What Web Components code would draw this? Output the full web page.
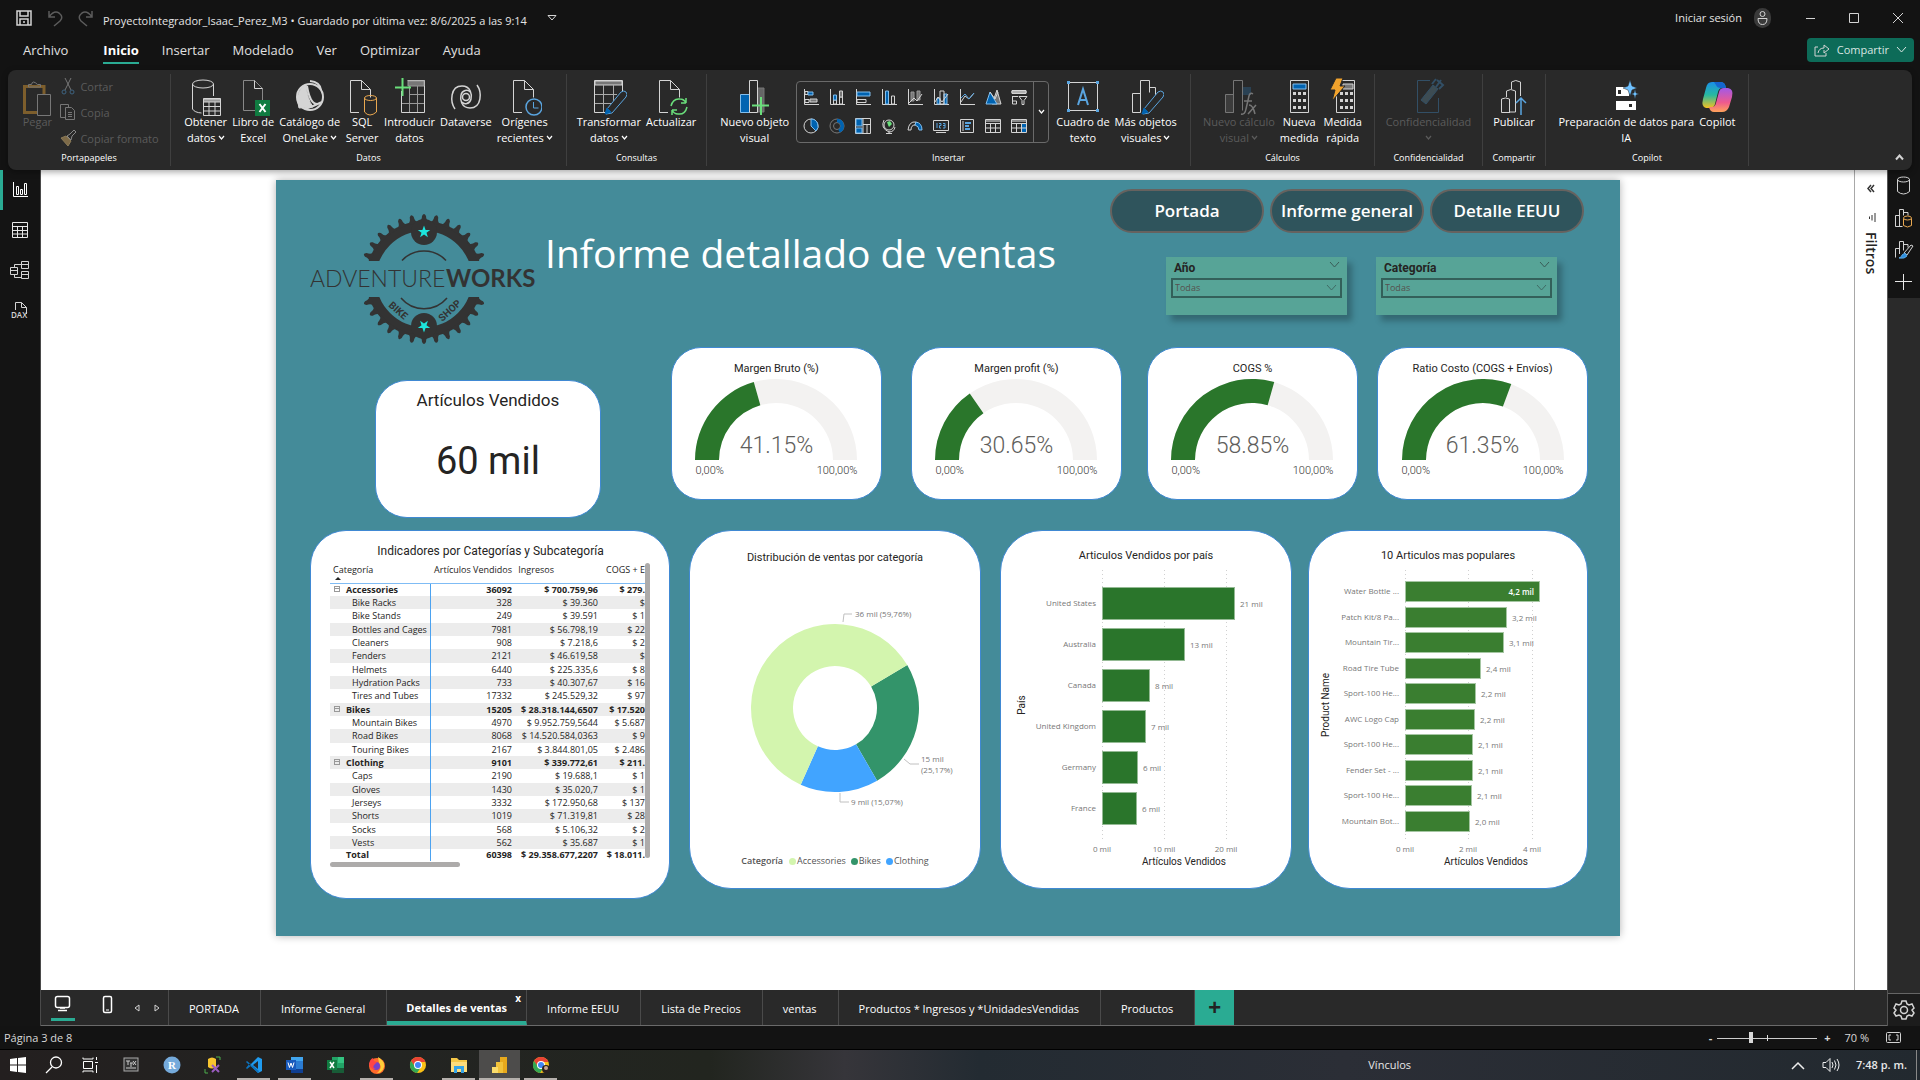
<!DOCTYPE html>
<html lang="es">
<head>
<meta charset="utf-8">
<title>ProyectoIntegrador_Isaac_Perez_M3</title>
<style>
  html, body { margin: 0; height: 100%; background: #131313; }
  body { font: 11px/16px "Open Sans", "Noto Sans", sans-serif; color: #fff; overflow: hidden; }
</style>
</head>
<body>
<app-shell></app-shell>
<script>
const W = '#d4d4d4', B = '#5aa5e0', F = '#0063b1', L = '#83beec';
const svg = (w, h, body, vb) => `<svg width="${w}" height="${h}" viewBox="${vb || `0 0 ${w} ${h}`}" fill="none" stroke="${W}" aria-hidden="true">${body}</svg>`;
const doc = `<path d="M7.5 2.5h11l8 8v22h-19z" stroke="#888"/><path d="M18.5 2.5v8h8"/>`;
const doc2 = `<path d="M14 34.500H5.500V2.500h11l9 9v8M16.500 2.500v9h9"/>`;
const chart3 = `<path d="M4.500 34.500v-19h8M12.500 34.500V2.500h9v12M21.500 9.500h6v8M4.500 34.500h8"/>`;
const pen = `<path d="M15 36l1-5 14-17q3-2 5 0 2 2 0 5l-14 16z" stroke="${B}" fill="#292929"/><path d="M14 36l2-6 4 4z" fill="${F}" stroke="${F}"/>`;
const spiral = 'M6 31C1 24 1 8 13 8c9 0 10 9 9 13-1 5-7 6-9 3';
const I = {
  paste: svg(36, 38, `<path d="M25 17V8.500H5.500v26H19" stroke="#7d5e2c" stroke-width="3"/><path d="M9.500 9V6.500h3q1-5 6 0h3V9z" stroke="#777"/><path d="M18.500 16.500h13v21h-13z" stroke="#777"/>`),
  cut: svg(16, 18, `<path d="M5 0l6 12M11 0L5 12" stroke="#777"/><circle cx="4" cy="14" r="2" stroke="#3d6380"/><circle cx="12" cy="14" r="2" stroke="#3d6380"/>`),
  copy: svg(16, 17, `<path d="M5 13.500H.500V.500h8v3M5.500 3.500h6l3 3v9h-9zM8 8.500h4M8 10.500h4M8 12.500h4" stroke="#777"/>`),
  brush: svg(16, 17, `<path d="M1 8l5-2 5 5-3 5z" fill="#7d6a48" stroke="#8a7a58"/><path d="M7 6l3-2 4-4 2 2-4 4-1 4z" stroke="#888"/>`),
  db: svg(34, 38, `<ellipse cx="14" cy="6" rx="10.500" ry="4"/><path d="M3.500 6v25q2 3.500 9 4M24.500 6v12"/><path d="M14.500 20.500h17v17h-17z"/><path d="M14.500 21h17v3h-17z" fill="#999"/><path d="M14.500 28.500h17M14.500 33h17M20 24v13M26 24v13"/>`),
  excel: svg(34, 38, doc + `<rect x="19" y="22" width="15" height="16" fill="#107c41" stroke="none"/><path d="M23.500 26l6 8M29.500 26l-6 8" stroke="#fff" stroke-width="2"/>`),
  lake: svg(34, 38, `<circle cx="17" cy="19" r="13" stroke-width="2"/><path d="M13 6Q1 15 6 30l14-1Q14 21 13 6z" fill="${W}"/><path d="M14 8q4 24 15 16M17 3q10 1 11 9M12 31q9-3 17-7" stroke-width="2"/>`),
  sql: svg(34, 38, doc2 + `<path d="M19.500 20v14q5 6 12 0V20" stroke="#e9a850"/><ellipse cx="25.500" cy="20" rx="6" ry="2.500" stroke="#e9a850"/>`),
  intro: svg(34, 38, `<path d="M8.500 13v21.500h23v-32h-17"/><path d="M15 3h16v5H15z" fill="#777" stroke="#999"/><path d="M16.500 8v26M24.500 8v26M16 16.500h15M9 25.500h22" stroke="#999"/><path d="M9.500 0v18M2 9.500h16" stroke="#6ade7b" stroke-width="2"/>`),
  verse: svg(34, 38, `<circle cx="17" cy="19" r="3.500" stroke-width="1.500"/><path d="${spiral}" stroke-width="1.500"/><path d="${spiral}" transform="rotate(180 17 19)" stroke-width="1.500"/>`),
  recent: svg(34, 38, doc2 + `<circle cx="26" cy="29" r="8" stroke="${B}" fill="#292929" stroke-width="1.500"/><path d="M25.500 24v6h5" stroke="${B}"/>`),
  transform: svg(36, 38, `<path d="M18 34.500H3.500v-32h28V18"/><path d="M4 3h27v4H4z" fill="#777"/><path d="M12.500 7v27M22.500 7v16M4 16.500h22M4 25.500h16" stroke="#aaa"/>` + pen),
  refresh: svg(34, 38, doc2 + `<path d="M17 28q2-8 9-7 4 0 6 4v-5m0 5h-5M33 29q-2 8-9 7-4 0-6-4v5m0-5h5" stroke="#6ade7b" stroke-width="1.500"/>`),
  newvis: svg(36, 38, `<path d="M20 10h7v24h-7z" fill="#666" stroke="#777"/><path d="M3.500 16.500h9v18h-9z" fill="${F}" stroke="${L}"/><path d="M12.500 2.500h8v32h-8z" fill="#292929"/><path d="M24 19v18M15 27.500h17" stroke="#6ade7b" stroke-width="2"/>`),
  textbox: svg(34, 38, `<path d="M2.500 4.500h29v28h-29z"/><path d="M12 27l5-16 5 16M14 22h6" stroke="${B}" stroke-width="2"/><path d="M1 3h3v3H1zM30 3h3v3h-3zM1 31h3v3H1zM30 31h3v3h-3z" fill="${B}" stroke="none"/>`),
  morevis: svg(36, 38, chart3 + pen),
  calc: svg(36, 38, `<g opacity=".45"><path d="M4.500 34.500v-18h8v18z" fill="#555"/><path d="M12.500 34.500V2.500h9v30"/><path d="M22 9h8v8h-8z" fill="#2d5f86" stroke="none"/><path d="M20 36q4 1 5-5l3-13q1-4 4-2M23 23h8M28 27q4 0 6 9M35 27l-8 9" stroke-width="1.500"/></g>`),
  measure: svg(30, 38, `<path d="M6.500 2.500h18v32h-18z"/><path d="M9 6h13v5H9z" fill="${F}" stroke="${L}"/><path d="M9 15.500h13M9 22.500h13M9 29.500h13" stroke-dasharray="3 2" stroke-width="3"/>`),
  quick: svg(32, 38, `<path d="M9.500 2.500h18v32h-18z"/><path d="M16 6h10v5H16z" fill="#777"/><path d="M13 15.500h13M13 22.500h13M13 29.500h13" stroke-dasharray="3 2" stroke-width="3"/><path d="M9 0h7l-3 8h5L5 23l3-11H3z" fill="#f2a32c" stroke="#292929"/>`),
  label: svg(34, 38, `<g opacity=".9" stroke="#33546d"><path d="M18 2.500H5.500v32h21V20"/><path d="M9 22L21 7l5 4-12 15z" fill="#405058"/><path d="M20 6l4-5M24 9l5-7M27 11l4-4-6-5" stroke-width="2"/></g>`),
  publish: svg(34, 38, `<path d="M13 34.500h-8.500V21q4-2 8 0v13M9.500 19v-6q4-3 9 0v21h-6M14.500 11V4q4-3 9 0v14"/><path d="M24 37V20M19 25l5-5 5 5" stroke="${B}" stroke-width="1.500"/>`),
  prep: svg(34, 38, `<path d="M7 9h13v9H7zM7 23h20v9H7z" fill="#fff" stroke="none"/><path d="M9 12h3v4H9zM20 26h3v3h-3z" fill="#292929" stroke="none"/><path d="M21 2l2 6 5 2-5 2-2 6-2-6-5-2 5-2zM26 11l1 4 3 1-3 1-1 4-1-4-3-1 3-1z" fill="#6ec1ff" stroke="#292929" stroke-width=".5"/>`),
  copilot: `<svg width="34" height="38" viewBox="0 0 34 38" aria-hidden="true"><defs><linearGradient id="ca" x1="0" y1="0" x2="0" y2="1"><stop stop-color="#1a8fe8"/><stop offset=".5" stop-color="#27b9a0"/><stop offset="1" stop-color="#f5c020"/></linearGradient><linearGradient id="cb" x1="0" y1="0" x2="0" y2="1"><stop stop-color="#a259e8"/><stop offset=".6" stop-color="#ee5a8e"/><stop offset="1" stop-color="#ffa25a"/></linearGradient></defs><path d="M12 4h9q4 0 5 6h-4q-3 0-4 4l-3 12q-1 4-5 4H6q-5-1-3-9l3-11q1-6 6-6z" fill="url(#ca)"/><path d="M22 34h-8q-4 0-5-5h3q3 0 4-4l3-11q1-4 5-4h4q6 1 4 9l-3 10q-2 5-7 5z" fill="url(#cb)"/><path d="M14 4h7q4 0 5 6h-5q-4 0-5-3z" fill="#1566cf"/></svg>`,
  save: svg(16, 16, `<path d="M1 1h14v14H1zM4 1v5h8V1M4 15V9h8v6M8 11v2" stroke-width="1.500"/>`),
  undo: svg(16, 18, `<path d="M2 2v6h6M2 8q5-7 10-4 5 4 1 8l-6 5" stroke="#5c5c5c" stroke-width="1.500"/>`),
  redo: svg(16, 18, `<path d="M14 2v6H8M14 8Q9 1 4 4q-5 4-1 8l6 5" stroke="#5c5c5c" stroke-width="1.500"/>`),
  caret: svg(10, 8, `<path d="M1 1.500h8L5 6z"/>`),
  chev: svg(7, 6, `<path d="M1 1l2.500 3L6 1" stroke="currentColor" stroke-width="1.200"/>`),
  chevL: svg(11, 8, `<path d="M1 1l4.500 5L10 1" stroke="currentColor"/>`),
  chevUp: svg(9, 7, `<path d="M1 5.500L4.500 1.500 8 5.500" stroke-width="2"/>`),
  user: svg(18, 20, `<rect x="0" y="0" width="17" height="20" rx="8.500" fill="#3a3a3a" stroke="none"/><circle cx="8.500" cy="6" r="2.500"/><path d="M4 10.500h9q0 6-4.500 6T4 10.500z"/>`),
  min: svg(12, 12, `<path d="M2 6.500h9" />`),
  max: svg(12, 12, `<path d="M1.500 1.500h9v9h-9z"/>`),
  close: svg(12, 12, `<path d="M1 1l10 10M11 1L1 11"/>`),
  share: svg(16, 14, `<path d="M4 4H1v9h11v-3M4 10q1-5 6-5V2l5 4-5 4V7"/>`),
  report: svg(16, 16, `<path d="M1.500 0v14.500H16M4.500 4.500h2v8h-2zM8.500 7.500h2v5h-2zM12.500 1.500h2v11h-2z" stroke="#fff"/>`),
  table: svg(18, 16, `<path d="M1.500.500h15v15h-15zM1 4.500h16M1 8.500h16M1 12h16M6.500 4v11M11.500 4v11" stroke="#e8e8e8"/>`),
  model: svg(20, 20, `<path d="M.500 7.500h7v7h-7zM.500 10.500h7M11.500 1.500h7v7h-7zM11.500 4.500h7M11.500 11.500h7v7h-7zM11.500 14.500h7M4.500 7V4.500h7M4.500 15v2.500h7"/>`),
  dax: `<svg width="18" height="18" viewBox="0 0 18 18" fill="none" stroke="#d4d4d4" aria-hidden="true"><path d="M4.500 9V1.500h6l5 5V13M10.500 1.500v5h5"/><text x="0" y="17" font-size="8" fill="#d4d4d4" stroke="none" font-family="Open Sans" font-weight="600">DAX</text></svg>`,
  cyl: svg(16, 20, `<path d="M1.500 3.500v12q6 5 12 0v-12"/><ellipse cx="7.500" cy="3.500" rx="6" ry="2.500"/>`),
  cylchart: svg(20, 20, `<path d="M1.500 18.500v-11h4M5.500 18.500v-17h4v6M1.500 18.500h7M10 4.500h4v3"/><path d="M9.500 10.500v7q4 3 8 0v-7" stroke="#e9a850"/><ellipse cx="13.500" cy="10" rx="4" ry="2" stroke="#e9a850"/>`),
  brushchart: svg(20, 20, `<path d="M1.500 17.500v-9h4M5.500 14V1.500h4v9M10 4.500h4v3"/><path d="M10 13l7-8 2 1-6 9z"/><path d="M5 18q3-1 3-3l3-2 2 3q-2 3-8 2z" fill="#2b8fe0" stroke="${B}"/>`),
  plus: svg(18, 18, `<path d="M8.500 1v16M0 8.500h17" stroke="#e8e8e8"/>`),
  gear: svg(22, 22, `<circle cx="11" cy="11" r="3.500" stroke-width="1.500"/><path d="M9 2h4l1 3 2 1 3-1 2 4-2 2 2 3-2 3-3-1-2 1-1 3H9l-1-3-2-1-3 1-2-3 2-3-2-2 2-4 3 1 2-1z" stroke-width="1.500"/>`),
  dleft: svg(8, 10, `<path d="M4 1L1 4.500 4 8M7 1L4 4.500 7 8" stroke="#333" stroke-width="1.500"/>`),
  filter: svg(10, 10, `<path d="M9 0v9M6 2v5.500M3.500 3.500v2.500" stroke="#333"/>`),
  monitor: svg(18, 18, `<rect x="1.500" y="1.500" width="14" height="11" rx="2" stroke="#fff" stroke-width="1.500"/><path d="M4 15.500h9M6 13h5" stroke="#fff" stroke-width="1.500"/>`),
  phone: svg(12, 20, `<rect x="1.500" y="1.500" width="8" height="16" rx="1.500" stroke="#fff" stroke-width="1.500"/><path d="M4 15h3" stroke="#fff"/>`),
  tleft: svg(6, 8, `<path d="M5 1L1 4l4 3z"/>`),
  tright: svg(6, 8, `<path d="M1 1l4 3-4 3z"/>`),
  fit: svg(16, 12, `<rect x=".500" y=".500" width="14" height="10" rx="1"/><path d="M5 3H3v5h2M10 3h2v5h-2"/>`),
  win: `<svg width="16" height="16" aria-hidden="true"><path d="M0 2l7-1v6.500H0zM8 1l8-1v7.500H8zM0 8.500h7V15l-7-1zM8 8.500h8V16l-8-1z" fill="#fff"/></svg>`,
  search: svg(18, 18, `<circle cx="11" cy="6.500" r="5.500" stroke="#fff" stroke-width="1.300"/><path d="M7 11l-6 6" stroke="#fff" stroke-width="1.300"/>`),
  task: svg(18, 16, `<path d="M2.500 4.500h9v7h-9zM2 .500V2h10V.500M2 15.500V14h10v1.500M15.500 0v3M15.500 8v8M14 5.500h3" stroke="#fff"/>`),
  tex: `<svg width="16" height="16" aria-hidden="true"><rect x="1" y="1" width="14" height="13" fill="#333" stroke="#aaa"/><path d="M3 4h4M5 4v4M7 6h3M8 6v4M10 4l3 4M13 4l-3 4M3 11h10" stroke="#ccc" fill="none"/></svg>`,
  rr: `<svg width="18" height="18" aria-hidden="true"><circle cx="9" cy="9" r="8.500" fill="#75aadb"/><text x="9" y="13" font-family="Liberation Serif" font-size="11" font-weight="700" fill="#fff" text-anchor="middle">R</text></svg>`,
  ssms: `<svg width="18" height="18" aria-hidden="true"><path d="M4 3q4-3 8 0v8q-4 3-8 0z" fill="#f7c52f"/><path d="M8 9l7 7M15 9l-7 7" stroke="#9a5cc0" stroke-width="2"/><path d="M12 1h4v3M1 13v4h3" stroke="#4cae4c" fill="none"/></svg>`,
  code: `<svg width="18" height="18" aria-hidden="true"><path d="M13 1l4 2v12l-4 2-8-8z" fill="#1f9cf0"/><path d="M13 5v8L8 9z" fill="#25282c"/><path d="M1 6l1-1 12 10-1 2zM1 12l1 1 5-4-2-2z" fill="#0c74c0"/></svg>`,
  word: `<svg width="18" height="18" aria-hidden="true"><path d="M5 1h12v16H5z" fill="#2b7cd3"/><path d="M5 1h12v4H5z" fill="#41a5ee"/><path d="M5 13h12v4H5z" fill="#103f91"/><path d="M0 4h10v10H0z" fill="#185abd"/><path d="M2 6.500l1.500 5L5 7l1.500 4.500 1.500-5" stroke="#fff" fill="none"/></svg>`,
  xl: `<svg width="18" height="18" aria-hidden="true"><path d="M5 1h12v16H5z" fill="#21a366"/><path d="M11 1h6v6h-6z" fill="#33c481"/><path d="M5 12h12v5H5z" fill="#185c37"/><path d="M0 4h10v10H0z" fill="#107c41"/><path d="M3 6l4 6M7 6l-4 6" stroke="#fff" stroke-width="1.500"/></svg>`,
  fox: `<svg width="18" height="18" aria-hidden="true"><circle cx="9" cy="10" r="8" fill="#ff6a2b"/><path d="M10 1q7 4 6 10-2 6-7 6 6-5 2-10z" fill="#ffce3a"/><circle cx="8" cy="10" r="4" fill="#7542c9"/><path d="M1 8q1-5 4-6l1 3 3 1-3 3q-2 3 2 4-6 1-7-5z" fill="#ff4545"/></svg>`,
  chrome: `<svg width="18" height="18" aria-hidden="true"><circle cx="9" cy="9" r="8" fill="#fbc116"/><path d="M9 1a8 8 0 0 0-7 4l4 6 3-5h7.400A8 8 0 0 0 9 1z" fill="#ea4335"/><path d="M2 5a8 8 0 0 0 6 12l4-6-5 1z" fill="#34a853"/><circle cx="9" cy="9" r="4" fill="#fff"/><circle cx="9" cy="9" r="3" fill="#4285f4"/></svg>`,
  folder: `<svg width="18" height="18" aria-hidden="true"><path d="M1 2h6l2 2h8v12H1z" fill="#f5c748"/><path d="M1 6h16v10H1z" fill="#fddc7c"/><path d="M4 10h10v7h-3v-4H7v4H4z" fill="#35a4e8"/></svg>`,
  pbi: `<svg width="18" height="18" aria-hidden="true"><path d="M9 1h7v16H9z" fill="#e8a91c"/><path d="M5 6h7v11H5z" fill="#f2c23a"/><path d="M1 11h6v6H1z" fill="#fbdc6b"/></svg>`,
  up: svg(14, 9, `<path d="M1 8l6-6 6 6" stroke="#eee" stroke-width="1.500"/>`),
  sound: svg(18, 16, `<path d="M1 5.500h3l4-4v13l-4-4H1zM10 5q2 3 0 6M12.500 3.500q3 4.500 0 9M15 2q4 6 0 12" stroke="#eee"/>`),
};
I.chromeUser = I.chrome.replace('</svg>', '<circle cx="14" cy="13" r="4" fill="#2a2020"/><circle cx="14" cy="12" r="2" fill="#caa58d"/></svg>');

const ax = `<path d="M1.500 0v15.500H16"/>`;
const GAL = [
  ax + `<path d="M2 2.500h3v3H2zM2 10.500h4v3H2z"/><path d="M5 3h5v3H5z" fill="${F}" stroke="${L}"/><path d="M7 10h7v3H7z" fill="#777"/>`,
  ax + `<path d="M4.500 11h3v4h-3zM10.500 8h3v7h-3z"/><path d="M4.500 6h3v5h-3z" fill="${F}" stroke="${L}"/><path d="M10.500 2h3v6h-3z" fill="#777"/>`,
  ax + `<path d="M2 3h13v4H2z" fill="${F}" stroke="${L}"/><path d="M2 10.500h9v3H2z"/>`,
  ax + `<path d="M4.500 2h3v13h-3z" fill="${F}" stroke="${L}"/><path d="M10.500 7h3v8h-3z"/>`,
  ax + `<path d="M4 3h3v9H4zM10 2h3v9h-3z" fill="#777" stroke="#999"/><path d="M2 14l5-5 3 3 5-7"/>`,
  ax + `<path d="M4 9h3v6H4zM11 5h3v10h-3z" fill="${F}" stroke="${L}"/><path d="M7 2h4v13H7zM2 13l3-5 4 5 6-8"/>`,
  ax + `<path d="M2 13l4-6 4 3 5-6"/><path d="M2 9l4-4 4 5 5-6" stroke="${B}"/>`,
  `<path d="M7 15L12 1l4 14z" fill="#777"/><path d="M1 15L5 3l7 12z" fill="${F}" stroke="${L}"/><path d="M5 3l5 7 3-7"/>`,
  `<path d="M1 1.500h14v3H1zM1 7.500h6M1.500 8v7h4v-3h-4M8 7.500h8l-3 4v4h-2v-4z"/><path d="M1 2h14v2H1z" fill="#888"/>`,
  `<circle cx="8" cy="8" r="7"/><path d="M8 1a7 7 0 0 1 5 12L8 8z" fill="${F}" stroke="${L}"/>`,
  `<circle cx="8" cy="8" r="7" stroke="#777"/><circle cx="8" cy="8" r="3.500" stroke="#777"/><path d="M8 2.500a5.500 5.500 0 0 1 2 10.500" stroke="${F}" stroke-width="3.500"/>`,
  `<path d="M.500.500h15v15H.500zM8 1v15M8 6.500h7M12 7v8"/><path d="M1 1h6v7H1zM1 10h6v5H1z" fill="${F}" stroke="${L}"/>`,
  `<circle cx="8" cy="7" r="5"/><path d="M6 4l3-1 2 3-3 3-1-2z" fill="#6ade7b" stroke="none"/><path d="M3 2Q-1 10 8 14q5 0 6-5M8 13v2.500M5 15.500h6"/>`,
  `<path d="M1 12q1-9 8-8l-1 3q-4 0-4 5z"/><path d="M9 4q6 1 6 8h-3q0-4-4-5z" fill="${F}" stroke="${L}"/>`,
  `<path d="M.500 2.500h15v10H.500zM3 14.500h10"/><path d="M4 5v5M6 5.500h2v2H6.500V10H8M10 5.500h2V10h-2M10 7.500h2" stroke="${B}"/>`,
  `<path d="M1.500 1.500h13v13h-13zM4 3v10"/><path d="M6 5h6M6 8h4M6 11h5" stroke="${B}" stroke-width="2"/>`,
  `<path d="M.500 1.500h15v13H.500zM1 5.500h15M1 10h15M5.500 5v10M10.500 5v10"/><path d="M1 2h14v2H1z" fill="#888" stroke="none"/>`,
  `<path d="M10 5h5v9h-5z" fill="${F}" stroke="none"/><path d="M.500 1.500h15v13H.500zM1 5.500h15M1 10h15M5.500 5v10M10.500 5v10"/><path d="M1 2h14v2H1z" fill="#888" stroke="none"/>`,
].map(b => svg(17, 17, b));

const base = `*{box-sizing:border-box}svg{display:block;flex:none}button{font:inherit;color:inherit;background:none;border:0;padding:0;margin:0;cursor:pointer}`;
function define(name, css, html) {
  customElements.define(name, class extends HTMLElement {
    connectedCallback() {
      if (this.shadowRoot) return;
      const root = this.attachShadow({ mode: 'open' });
      root.innerHTML = `<style>${base}${css}</style>${typeof html === 'function' ? html(this) : html}`;
    }
  });
}
const at = (el, n, d = '') => el.getAttribute(n) ?? d;

define('title-bar', `
  :host{display:flex;align-items:center;height:36px;padding:0 16px;background:#131313}
  button{display:flex;align-items:center;justify-content:center}
  .quick{display:flex;gap:15px;align-items:center}
  .name{margin:5px 20px 0 9px;color:#e4e4e4}
  .right{display:flex;margin-left:auto;align-items:center;gap:32px}
  .user{gap:12px;color:#e4e4e4}`,
  `<div class="quick"><button aria-label="Guardar">${I.save}</button><button aria-label="Deshacer">${I.undo}</button><button aria-label="Rehacer">${I.redo}</button></div>
   <span class="name">ProyectoIntegrador_Isaac_Perez_M3 • Guardado por última vez: 8/6/2025 a las 9:14</span><button aria-label="Más">${I.caret}</button>
   <div class="right"><button class="user">Iniciar sesión ${I.user}</button><button aria-label="Minimizar">${I.min}</button><button aria-label="Maximizar">${I.max}</button><button aria-label="Cerrar">${I.close}</button></div>`);

define('menu-bar', `
  :host{display:flex;align-items:center;height:34px;padding:0 6px 8px 23px;background:#131313;font-size:13px;line-height:18px}
  nav{display:flex;gap:23px}
  a{color:#e0e0e0;text-decoration:none;padding:6px 0 3px;border-bottom:2px solid transparent}
  a:first-child{margin-right:12px}
  a.on{font-weight:700;color:#fff;border-color:#2aab93}
  button{display:flex;align-items:center;gap:7px;margin:2px 0 0 auto;height:24px;padding:0 7px;border-radius:4px;background:#0d6b58;color:#d8e6e2;font-size:11px}`,
  `<nav>${['Archivo', 'Inicio', 'Insertar', 'Modelado', 'Ver', 'Optimizar', 'Ayuda'].map(t => `<a href="#"${t === 'Inicio' ? ' class="on"' : ''}>${t}</a>`).join('')}</nav>
   <button>${I.share}<span>Compartir</span>${I.chevL}</button>`);

define('ribbon-group', `
  :host{display:flex;flex-direction:column;justify-content:space-between;border-right:1px solid #3f3f3f;margin:4px 0;padding:4px 0 0;flex:0 0 var(--w)}
  .items{display:flex;justify-content:center;gap:5px}
  .cap{text-align:center;font-size:9px;line-height:12px;padding-bottom:2px;white-space:nowrap}`,
  el => `<div class="items"><slot></slot></div><div class="cap">${at(el, 'caption')}</div>`);

define('ribbon-button', `
  :host{display:block}
  button{display:flex;flex-direction:column;align-items:center;line-height:16px;white-space:nowrap}
  :host([off]) button{color:#5b5b5b}
  .l{display:flex;flex-direction:column;align-items:center;margin-top:-2px}
  .r{display:flex;align-items:center;gap:2px;min-height:16px}`,
  el => {
    const lines = at(el, 'label').split('|');
    return `<button${el.hasAttribute('off') ? ' disabled' : ''}>${I[at(el, 'icon')]}<span class="l">${lines.map((t, i) =>
      `<span class="r">${t}${el.hasAttribute('menu') && i === lines.length - 1 ? I.chev : ''}</span>`).join('')}</span></button>`;
  });

define('clip-actions', `
  :host{display:flex;flex-direction:column;gap:9px;color:#5b5b5b;padding-top:0;font-size:11px}
  button{display:flex;align-items:center;gap:4px;height:17px;white-space:nowrap;color:inherit}`,
  `<button disabled>${I.cut}Cortar</button><button disabled>${I.copy}Copia</button><button disabled>${I.brush}Copiar formato</button>`);

define('visual-gallery', `
  :host{display:flex;border:1px solid #6a6a6a;border-radius:4px;height:62px;margin:3px 2px 0}
  .g{display:grid;grid-template-columns:repeat(9,26px);grid-template-rows:29px 29px;padding:1px;place-items:center}
  .m{width:15px;border-left:1px solid #6a6a6a;display:flex;align-items:center;justify-content:center}
  .g button{display:flex}`,
  `<div class="g">${GAL.map((g, i) => `<button aria-label="Objeto visual ${i + 1}">${g}</button>`).join('')}</div><button class="m" aria-label="Más">${I.chev}</button>`);

define('ribbon-bar', `
  :host{display:flex;height:100px;margin:0 8px;background:#292929;border-radius:8px;position:relative;z-index:2;box-shadow:0 2px 6px rgba(0,0,0,.35)}
  .fold{margin:auto 8px 9px auto}`,
  `<ribbon-group caption="Portapapeles" style="--w:163px"><ribbon-button off icon="paste" label="Pegar"></ribbon-button><clip-actions></clip-actions></ribbon-group>
   <ribbon-group caption="Datos" style="--w:396px"><ribbon-button icon="db" label="Obtener|datos" menu></ribbon-button><ribbon-button icon="excel" label="Libro de|Excel"></ribbon-button><ribbon-button icon="lake" label="Catálogo de|OneLake" menu></ribbon-button><ribbon-button icon="sql" label="SQL|Server"></ribbon-button><ribbon-button icon="intro" label="Introducir|datos"></ribbon-button><ribbon-button icon="verse" label="Dataverse"></ribbon-button><ribbon-button icon="recent" label="Orígenes|recientes" menu></ribbon-button></ribbon-group>
   <ribbon-group caption="Consultas" style="--w:140px"><ribbon-button icon="transform" label="Transformar|datos" menu></ribbon-button><ribbon-button icon="refresh" label="Actualizar"></ribbon-button></ribbon-group>
   <ribbon-group caption="Insertar" style="--w:484px"><ribbon-button icon="newvis" label="Nuevo objeto|visual"></ribbon-button><visual-gallery></visual-gallery><ribbon-button icon="textbox" label="Cuadro de|texto"></ribbon-button><ribbon-button icon="morevis" label="Más objetos|visuales" menu></ribbon-button></ribbon-group>
   <ribbon-group caption="Cálculos" style="--w:184px"><ribbon-button off icon="calc" label="Nuevo cálculo|visual" menu></ribbon-button><ribbon-button icon="measure" label="Nueva|medida"></ribbon-button><ribbon-button icon="quick" label="Medida|rápida"></ribbon-button></ribbon-group>
   <ribbon-group caption="Confidencialidad" style="--w:108px"><ribbon-button off icon="label" label="Confidencialidad|" menu></ribbon-button></ribbon-group>
   <ribbon-group caption="Compartir" style="--w:63px"><ribbon-button icon="publish" label="Publicar"></ribbon-button></ribbon-group>
   <ribbon-group caption="Copilot" style="--w:203px"><ribbon-button icon="prep" label="Preparación de datos para|IA"></ribbon-button><ribbon-button icon="copilot" label="Copilot"></ribbon-button></ribbon-group>
   <button class="fold" aria-label="Contraer">${I.chevUp}</button>`);

define('view-rail', `
  :host{display:flex;flex-direction:column;width:41px;background:#141414;border-right:1px solid #4a4a4a}
  button{height:40px;display:flex;align-items:center;justify-content:center;border-left:3px solid transparent;padding-right:3px}
  .on{border-color:#2aab93}`,
  ['report', 'table', 'model', 'dax'].map((n, i) => `<button aria-label="Vista ${n}"${i ? '' : ' class="on"'}>${I[n]}</button>`).join(''));

define('pane-rail', `
  :host{display:flex;flex-direction:column;width:33px;background:#2a2a2a;border-left:1px solid #555}
  .t{background:#141414;height:128px;display:flex;flex-direction:column}
  button{display:flex;align-items:center;justify-content:center;height:32px;width:100%}
  .s{margin-top:auto;height:33px;border-top:1px solid #666;background:#1c1c1c}`,
  `<div class="t"><button aria-label="Datos">${I.cyl}</button><button aria-label="Compilar">${I.cylchart}</button><button aria-label="Formato">${I.brushchart}</button><button aria-label="Nuevo">${I.plus}</button></div><button class="s" aria-label="Configuración">${I.gear}</button>`);

define('filters-pane', `
  :host{display:flex;flex-direction:column;align-items:center;width:33px;background:#fff;border-left:1px solid #a8a8a8;color:#252423;padding-top:14px}
  button{display:flex;margin-bottom:19px}
  b{writing-mode:vertical-rl;font-size:14px;line-height:18px;font-weight:600;margin-top:9px}`,
  `<button aria-label="Expandir">${I.dleft}</button>${I.filter}<b>Filtros</b>`);

define('brand-logo', `:host{display:block;flex:none}`, () => {
  let teeth = '';
  for (let a = 0; a < 360; a += 11.25) teeth += `<use href="#t" transform="rotate(${a} 112 66)"/>`;
  const star = 'M0-6.500L1.600-2 6.200-2 2.500.800 3.900 5.300 0 2.600-3.900 5.300-2.500.800-6.200-2-1.600-2z';
  return `<svg width="226" height="132" viewBox="0 0 226 132" role="img" aria-label="Adventure Works">
    <defs><path id="t" d="M106 10q4-2 4-7 2-4 4 0 0 5 4 7z"/><clipPath id="c"><path d="M0 0h226v48H0zM0 84h226v48H0z"/></clipPath></defs>
    <g transform="translate(2 0)"><g clip-path="url(#c)" fill="#333"><circle cx="112" cy="66" r="53" fill="none" stroke="#333" stroke-width="10"/>${teeth}
    <circle cx="112" cy="19" r="13"/><circle cx="112" cy="113" r="13"/></g>
    <path d="M90 47.500a30 30 0 0 1 44 0M89 85a30 30 0 0 0 46 0" fill="none" stroke="#333" stroke-width="1.500"/>
    <path d="${star}" transform="translate(112 19)" fill="#1de5dc"/><path d="${star}" transform="translate(112 113) rotate(180)" fill="#1de5dc"/>
    <g font-family="Roboto" font-weight="700" font-size="10" text-anchor="middle" fill="#333"><text transform="translate(84 100) rotate(42)">BIKE</text><text transform="translate(140 100) rotate(-42)">SHOP</text></g></g>
    <g fill="#333" font-family="Lato"><text x="0" y="74" font-weight="300" font-size="23">ADVENTURE</text>
    <text x="136" y="74" font-weight="700" font-size="24">WORKS</text></g></svg>`;
});

define('pill-button', `
  :host{display:block;flex:0 0 154px}
  button{width:100%;height:44px;border-radius:22px;border:2px solid #66625f;background:#2f545c;color:#fff;font-size:17px;line-height:20px;font-weight:600;white-space:nowrap}`,
  `<button><slot></slot></button>`);

define('slicer-box', `
  :host{display:block;flex:0 0 181px;height:58px;background:#57a497;box-shadow:5px 6px 6px rgba(0,0,0,.25);color:#252423;padding:2px 5px 0}
  .h{display:flex;justify-content:space-between;padding:0 2px 0 3px;color:#3a5c57}
  label{font:700 12px/18px Roboto,sans-serif;color:#252423}
  .h svg{margin-top:2px}
  .s{display:grid;align-items:center;margin-top:1px}
  select{grid-area:1/1;appearance:none;width:100%;height:20px;border:2px solid #33605a;border-radius:0;background:transparent;font:9px/14px "Open Sans",sans-serif;color:#56514e;padding:0 2px;margin:0}
  .s svg{grid-area:1/1;justify-self:end;margin-right:5px;pointer-events:none;color:#3f6b65}`,
  el => `<div class="h"><label for="s">${at(el, 'label')}</label>${I.chevL}</div><div class="s"><select id="s"><option>Todas</option></select>${I.chevL}</div>`);

const card = `background:#fff;border:1px solid #4089d3;color:#252423;`;
define('kpi-card', `
  :host{display:flex;flex-direction:column;align-items:center;${card}border-radius:32px;height:138px;font-family:Roboto,sans-serif;padding-top:9px}
  h2{margin:0;font-size:17px;line-height:20px;font-weight:400}
  strong{font-size:38px;line-height:44px;font-weight:400;margin-top:29px}`,
  el => `<h2>${at(el, 'label')}</h2><strong>${at(el, 'value')}</strong>`);

const pt = (cx, cy, r, deg) => { const a = (deg - 90) * Math.PI / 180; return `${(cx + r * Math.cos(a)).toFixed(2)} ${(cy + r * Math.sin(a)).toFixed(2)}`; };
const arc = (cx, cy, R, r, a, b, fill) => { const g = b - a > 180 ? 1 : 0; return `<path d="M${pt(cx, cy, R, a)}A${R} ${R} 0 ${g} 1 ${pt(cx, cy, R, b)}L${pt(cx, cy, r, b)}A${r} ${r} 0 ${g} 0 ${pt(cx, cy, r, a)}z" fill="${fill}" stroke="none"/>`; };

define('gauge-card', `
  :host{display:flex;flex-direction:column;align-items:center;${card}border-radius:30px;height:153px;font-family:Roboto,sans-serif;padding-top:13px}
  h2{margin:0;font-size:11px;line-height:16px;font-weight:400}
  figure{margin:2px 0 0;display:grid;width:162px}
  figure>*{grid-area:1/1}
  output{align-self:end;justify-self:center;font-size:23px;line-height:24px;font-weight:300;color:#605e5c;padding-bottom:2px}
  .e{display:flex;justify-content:space-between;width:162px;font-size:11px;line-height:14px;margin-top:4px;font-weight:300;color:#333}`,
  el => {
    const v = parseFloat(at(el, 'value'));
    return `<h2>${at(el, 'label')}</h2><figure><svg width="162" height="81">${arc(81, 81, 81, 57, -90, 90, '#f3f2f1')}${arc(81, 81, 81, 57, -90, -90 + v * 1.8, '#2a762b')}</svg><output>${at(el, 'value')}%</output></figure><div class="e"><span>0,00%</span><span>100,00%</span></div>`;
  });

const rows = [
  ['Accessories', '36092', '700.759,96', '279.', 1], ['Bike Racks', '328', '39.360', ''], ['Bike Stands', '249', '39.591', '1'],
  ['Bottles and Cages', '7981', '56.798,19', '22'], ['Cleaners', '908', '7.218,6', '2'], ['Fenders', '2121', '46.619,58', ''],
  ['Helmets', '6440', '225.335,6', '8'], ['Hydration Packs', '733', '40.307,67', '16'], ['Tires and Tubes', '17332', '245.529,32', '97'],
  ['Bikes', '15205', '28.318.144,6507', '17.520', 1], ['Mountain Bikes', '4970', '9.952.759,5644', '5.687'], ['Road Bikes', '8068', '14.520.584,0363', '9'],
  ['Touring Bikes', '2167', '3.844.801,05', '2.486'], ['Clothing', '9101', '339.772,61', '211.', 1], ['Caps', '2190', '19.688,1', '1'],
  ['Gloves', '1430', '35.020,7', '1'], ['Jerseys', '3332', '172.950,68', '137'], ['Shorts', '1019', '71.319,81', '28'],
  ['Socks', '568', '5.106,32', '2'], ['Vests', '562', '35.687', '1'],
];
define('matrix-card', `
  :host{display:flex;flex-direction:column;${card}border-radius:36px;height:369px;padding:11px 18px 0 19px}
  h2{margin:0;text-align:center;font:400 12px/18px Roboto,sans-serif}
  .w{display:grid;grid-template-columns:315px 5px;margin:3px 0 0}
  table{border-collapse:collapse;table-layout:fixed;width:315px;font-size:9px;line-height:12px;white-space:nowrap}
  th,td{padding:0;text-align:right;font-weight:400}
  td:nth-child(3){padding-right:4px}
  thead th{height:20px;padding-bottom:6px;border-bottom:1px solid #7fbcf5}
  thead th:nth-child(1){text-align:left;padding-left:3px}
  thead th:nth-child(3),thead th:nth-child(4){text-align:left;padding-left:4px}
  tr>:first-child{text-align:left}
  tbody th,tfoot th{padding-left:22px;border-right:1px solid #4ba2f0}
  tbody tr{height:13px}tbody tr:nth-child(3n){height:14px}
  tbody tr:nth-child(even){background:#ececec}
  tr.g th,tr.g td,tfoot th,tfoot td{font-weight:700}
  tfoot th{padding-left:16px}
  tr.g th{padding-left:4px}
  i{display:inline-block;width:6px;height:6px;border:1px solid #999;margin-right:6px;background:linear-gradient(#999,#999) center/4px 1px no-repeat;vertical-align:1px}
  .sort{display:block;width:0;height:0;border:3px solid transparent;border-bottom-color:#252423;border-top:0;margin:1px 0 -4px 2px}
  .v{background:#adabaa;border-radius:3px;height:295px}
  .h{background:#adabaa;border-radius:3px;height:5px;width:130px;margin-top:1px}`,
  () => `<h2>Indicadores por Categorías y Subcategoría</h2><div class="w"><table>
    <colgroup><col style="width:100px"><col style="width:82px"><col style="width:90px"><col></colgroup>
    <thead><tr><th>Categoría<span class="sort"></span></th><th>Artículos Vendidos</th><th>&nbsp;Ingresos</th><th>COGS + E</th></tr></thead>
    <tbody>${rows.map(r => `<tr${r[4] ? ' class="g"' : ''}><th scope="row">${r[4] ? '<i></i>' : ''}${r[0]}</th><td>${r[1]}</td><td>$ ${r[2]}</td><td>$ ${r[3]}</td></tr>`).join('')}</tbody>
    <tfoot><tr><th scope="row">Total</th><td>60398</td><td>$ 29.358.677,2207</td><td>$ 18.011.</td></tr></tfoot></table><div class="v"></div></div><div class="h"></div>`);

define('donut-card', `
  :host{display:flex;flex-direction:column;align-items:center;${card}border-radius:42px;height:359px;padding-top:18px}
  h2{margin:0;font:400 11px/18px Roboto,sans-serif}
  svg{margin-top:32px}
  text{font-size:8px;fill:#777;stroke:none}
  ul{display:flex;align-items:center;list-style:none;margin:25px 0 0;padding:0;font-size:9px;line-height:14px;color:#555;gap:5px}
  ul b{font-weight:600;margin-right:1px}
  li{display:flex;align-items:center;gap:1px}
  li+li::before{content:"";width:7px;height:7px;border-radius:50%;background:var(--c)}`,
  () => `<h2>Distribución de ventas por categoría</h2>
   <svg width="290" height="230" fill="none" stroke="#c0c0c0">${arc(145, 109, 84, 42, 59.3, 149.9, '#33946a')}${arc(145, 109, 84, 42, 149.9, 204.1, '#41a4ff')}${arc(145, 109, 84, 42, 204.1, 419.3, '#d3f5ae')}
   <path d="M153 23l1-8h8M214 160l6 5h9M150 194v9h9"/>
   <text x="165" y="18">36 mil (59,76%)</text><text x="231" y="163">15 mil</text><text x="231" y="174">(25,17%)</text><text x="161" y="206">9 mil (15,07%)</text></svg>
   <ul><li><b>Categoría</b></li><li style="--c:#d3f5ae">Accessories</li><li style="--c:#33946a">Bikes</li><li style="--c:#41a4ff">Clothing</li></ul>`);

define('bar-card', `
  :host{display:flex;flex-direction:column;align-items:center;${card}border-radius:42px;height:359px;padding-top:16px}
  h2{margin:0;font:400 11px/18px Roboto,sans-serif}
  text{font-size:8px;fill:#777;stroke:none}
  .end{text-anchor:end}.mid{text-anchor:middle}
  .in{fill:#fff;font-weight:600;text-anchor:end}
  .ttl{font:10px Roboto,sans-serif;fill:#252423;text-anchor:middle}`,
  el => {
    const c = JSON.parse(at(el, 'data'));
    const bars = c.items.map(([n, w, l], i) => {
      const y = Math.round(c.y + c.step * i), m = y + c.h / 2;
      return `<rect x="${c.x}.5" y="${y}.5" width="${w}" height="${c.h}" fill="${c.fill}" stroke="${c.line}"/><text class="end" x="${c.x - 6}" y="${m + 3}">${n}</text>` +
        (w > 133 ? `<text class="in" x="${c.x + w - 5}" y="${m + 4}">${l}</text>` : `<text x="${c.x + w + 6}" y="${m + 4}">${l}</text>`);
    }).join('');
    return `<h2>${at(el, 'label')}</h2><svg width="${c.w}" height="310">
      ${c.ticks.map(([x, t]) => `<path d="M${x}.5 5v271" stroke="#d0d0d0" stroke-dasharray="1 3"/><text class="mid" x="${x}" y="287">${t}</text>`).join('')}${bars}
      <text class="ttl" x="${c.tx}" y="300">Artículos Vendidos</text><text class="ttl" transform="translate(${c.ax} 140) rotate(-90)">${c.axis}</text></svg>`;
  });

const country = { w: 290, x: 101, y: 22, step: 41, h: 32, fill: '#2a752b', line: '#94ba94', tx: 183, ax: 24, axis: 'País', ticks: [[101, '0 mil'], [163, '10 mil'], [225, '20 mil']],
  items: [['United States', 132, '21 mil'], ['Australia', 82, '13 mil'], ['Canada', 47, '8 mil'], ['United Kingdom', 43, '7 mil'], ['Germany', 35, '6 mil'], ['France', 34, '6 mil']] };
const popular = { w: 278, x: 96, y: 16, step: 25.5, h: 20, fill: '#3a7e30', line: '#a5c6a2', tx: 177, ax: 20, axis: 'Product Name', ticks: [[96, '0 mil'], [159, '2 mil'], [223, '4 mil']],
  items: [['Water Bottle ...', 134, '4,2 mil'], ['Patch Kit/8 Pa...', 101, '3,2 mil'], ['Mountain Tir...', 98, '3,1 mil'], ['Road Tire Tube', 75, '2,4 mil'], ['Sport-100 He...', 70, '2,2 mil'], ['AWC Logo Cap', 69, '2,2 mil'], ['Sport-100 He...', 67, '2,1 mil'], ['Fender Set - ...', 67, '2,1 mil'], ['Sport-100 He...', 66, '2,1 mil'], ['Mountain Bot...', 64, '2,0 mil']] };

define('report-page', `
  :host{display:flex;flex-direction:column;flex:1;background:#448b99;box-shadow:0 0 8px rgba(0,0,0,.3);padding:0 32px 0 34px;min-width:0}
  header{display:flex;height:167px}
  brand-logo{margin-top:33px}
  h1{margin:46px auto 0 9px;font-size:39px;line-height:54px;font-weight:400;white-space:nowrap}
  .nav{display:flex;gap:6px;padding:9px 4px 0 0}
  .sl{display:flex;gap:29px;justify-content:flex-end;padding:24px 31px 0 0}
  .k{display:flex;align-items:flex-start;height:183px}
  kpi-card{flex:226 1 0;margin:33px 70px 0 65px}
  gauge-card{flex:211 1 0;margin-right:29px}
  gauge-card:nth-of-type(2){margin-right:25px}
  gauge-card:nth-of-type(3){margin-right:19px}
  gauge-card:nth-of-type(4){margin-right:0}
  .b{display:grid;align-items:start;grid-template-columns:360fr 292fr 292fr 277fr;gap:19px}
  .b>*{min-width:0}
  .b>:last-child{margin-left:-3px}`,
  `<header><brand-logo></brand-logo><h1>Informe detallado de ventas</h1>
    <div><div class="nav"><pill-button>Portada</pill-button><pill-button>Informe general</pill-button><pill-button>Detalle EEUU</pill-button></div>
    <div class="sl"><slicer-box label="Año"></slicer-box><slicer-box label="Categoría"></slicer-box></div></div></header>
   <div class="k"><kpi-card label="Artículos Vendidos" value="60 mil"></kpi-card>
    <gauge-card label="Margen Bruto (%)" value="41.15"></gauge-card><gauge-card label="Margen profit (%)" value="30.65"></gauge-card><gauge-card label="COGS %" value="58.85"></gauge-card><gauge-card label="Ratio Costo (COGS + Envíos)" value="61.35"></gauge-card></div>
   <div class="b"><matrix-card></matrix-card><donut-card></donut-card>
    <bar-card label="Articulos Vendidos por país" data='${JSON.stringify(country)}'></bar-card><bar-card label="10 Articulos mas populares" data='${JSON.stringify(popular)}'></bar-card></div>`);

define('page-tabs', `
  :host{display:flex;height:36px;background:#292929;border-bottom:1px solid #6a6a6a}
  .v{display:flex;width:128px;align-items:stretch;border-right:1px solid #4a4a4a;padding-left:10px}
  .v button{display:flex;align-items:center;justify-content:center}
  .v .d{width:24px;margin-right:23px;border-bottom:3px solid #2aab93;margin-bottom:4px}
  .v .p{width:20px;margin-right:9px;padding-bottom:5px}
  .v .a{width:20px}
  .t{padding:2px 21px 0 20px;border-right:1px solid #4a4a4a;white-space:nowrap;display:grid;align-items:center;height:35px}
  .t.on{font-weight:700;padding:5px 19px 0;border-bottom:4px solid #2aab93;position:relative}
  .x{position:absolute;right:5px;top:0;font-weight:700;font-size:10px}
  .add{width:39px;background:#2aab93;color:#222;font:700 22px/30px "Liberation Sans",sans-serif}`,
  `<div class="v"><button class="d" aria-label="Escritorio">${I.monitor}</button><button class="p" aria-label="Móvil">${I.phone}</button><button class="a" aria-label="Anterior">${I.tleft}</button><button class="a" aria-label="Siguiente">${I.tright}</button></div>
   ${['PORTADA', 'Informe General', 'Detalles de ventas', 'Informe EEUU', 'Lista de Precios', 'ventas', 'Productos * Ingresos y *UnidadesVendidas', 'Productos'].map((t, i) => `<button class="t${i === 2 ? ' on' : ''}">${t}${i === 2 ? '<span class="x">x</span>' : ''}</button>`).join('')}
   <button class="add" aria-label="Nueva página">+</button>`);

define('status-bar', `
  :host{display:flex;align-items:center;height:24px;background:#131313;padding:0 18px 0 4px;border-bottom:1px solid #000;color:#d8d8d8}
  .z{margin-left:auto;display:flex;align-items:center}
  .z button{width:10px;text-align:center;font-weight:700}
  label{display:flex;margin:0 5px 0 2px}
  input{appearance:none;width:100px;height:12px;margin:0;background:linear-gradient(#ddd,#ddd) 50px 3px/1px 6px no-repeat,linear-gradient(#ccc,#ccc) 0 6px/100% 1px no-repeat}
  input::-webkit-slider-thumb{appearance:none;width:4px;height:11px;background:#d8d8d8}
  span{margin:0 17px 0 12px}`,
  `Página 3 de 8<div class="z"><button aria-label="Alejar">-</button><label><input type="range" min="0" max="100" value="33" aria-label="Zoom"></label><button aria-label="Acercar">+</button><span>70 %</span>${I.fit}</div>`);

define('task-bar', `
  :host{display:flex;height:30px;background:linear-gradient(90deg,#231f1f 0,#232422 20%,#22251f 37%,#36353a 44%,#232b32 51%,#2b2e36 70%,#22292f 100%);color:#e8e8e8}
  button{display:flex;align-items:center;justify-content:center;width:36px;border-bottom:2px solid transparent;padding-top:2px}
  .a{width:33px;margin:0 4px}
  .a:nth-of-type(4){margin-left:6px}
  .r{border-color:#b5b0ac}
  .f{background:#4d4c4b;width:41px;margin:0}
  .e{margin-left:auto;display:flex;align-items:center;font-size:11px}
  .e button{width:auto;border:0;padding:0}
  .e .l{margin-right:380px}.e .u{margin-right:17px}.e .s{margin-right:16px}
  .e .t{padding-right:9px;margin-right:3px;border-right:1px solid #888;height:30px;align-items:center;width:auto;font-weight:600}`,
  `<button aria-label="Inicio">${I.win}</button><button aria-label="Buscar">${I.search}</button><button aria-label="Vista de tareas">${I.task}</button>` +
  [['tex', ''], ['rr', ''], ['ssms', ''], ['code', 'r'], ['word', 'r'], ['xl', ''], ['fox', 'r'], ['chrome', ''], ['folder', 'r'], ['pbi', 'r f'], ['chromeUser', 'r']].map(([n, c]) => `<button class="a ${c}" aria-label="${n}">${I[n]}</button>`).join('') +
  `<div class="e"><button class="l">Vínculos</button><button class="u" aria-label="Iconos ocultos">${I.up}</button><button class="s" aria-label="Volumen">${I.sound}</button><button class="t">7:48 p. m.</button></div>`);

define('app-shell', `
  :host{display:flex;flex-direction:column;height:100vh}
  .m{flex:1;display:flex;min-height:0}
  .c{flex:1;display:flex;flex-direction:column;min-width:0}
  .w{flex:1;display:flex;min-height:0}
  .stage{flex:1;display:flex;background:#fff;padding:10px 234px 54px 235px;min-width:0}`,
  `<title-bar></title-bar><menu-bar></menu-bar><ribbon-bar></ribbon-bar>
   <div class="m"><view-rail></view-rail><div class="c"><div class="w"><div class="stage"><report-page></report-page></div><filters-pane></filters-pane></div><page-tabs></page-tabs></div><pane-rail></pane-rail></div>
   <status-bar></status-bar><task-bar></task-bar>`);
</script>
</body>
</html>
